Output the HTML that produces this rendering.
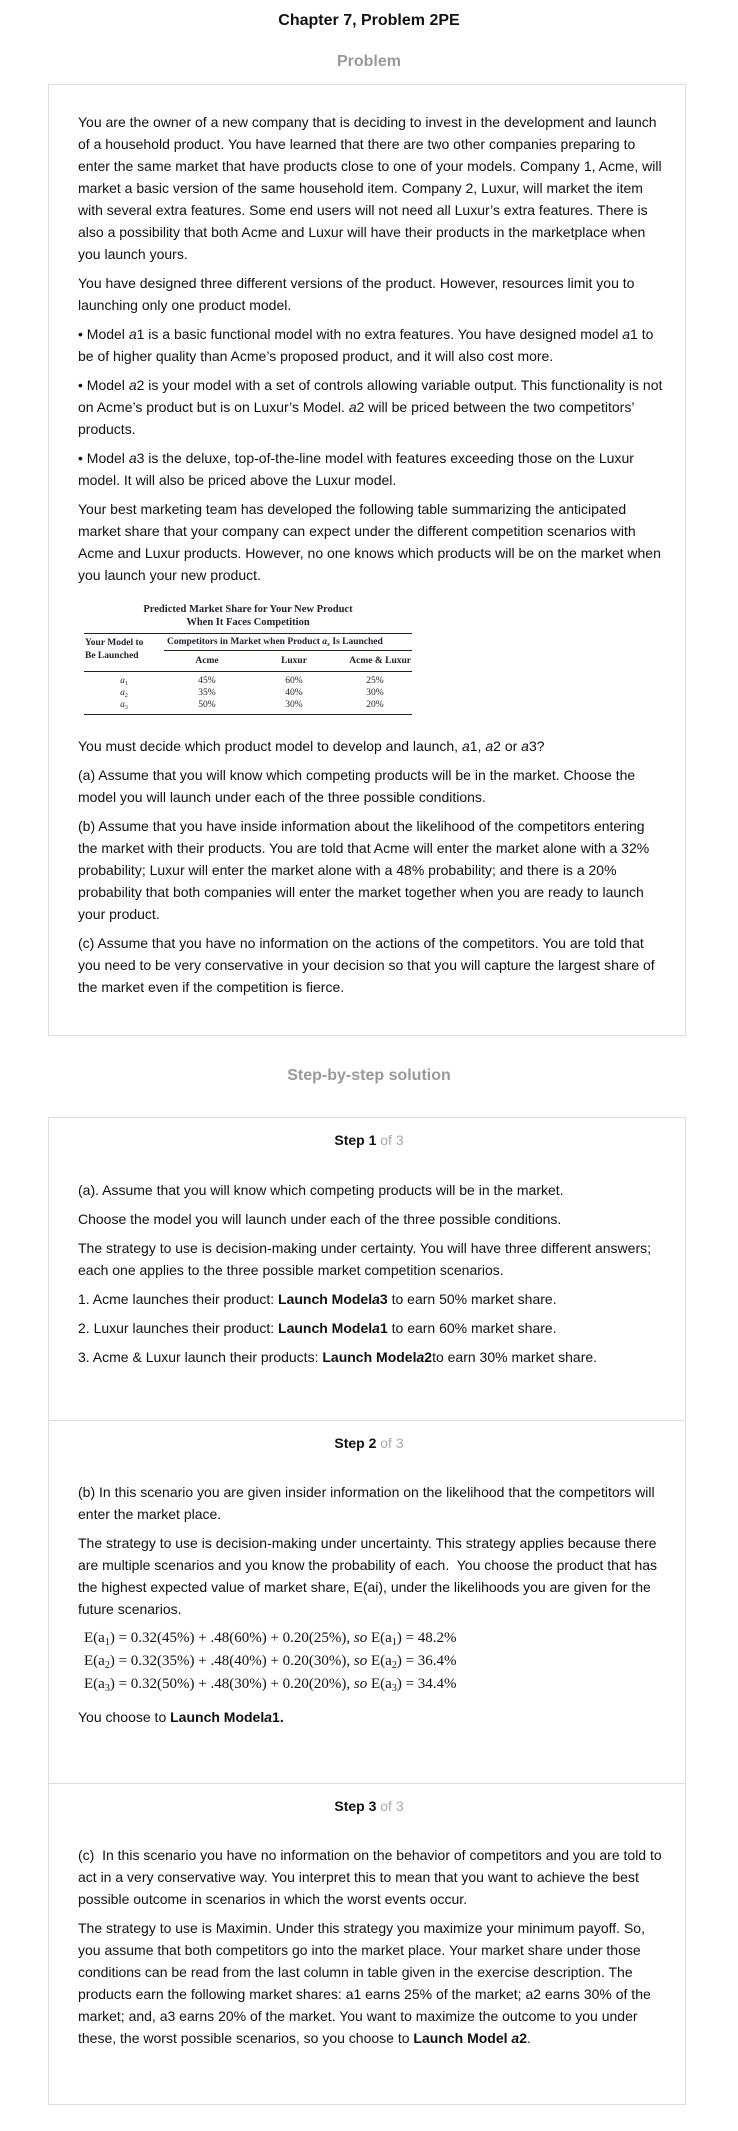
<!DOCTYPE html>
<html><head><meta charset="utf-8"><style>
body{margin:0;background:#fff;font-family:"Liberation Sans",Arial,sans-serif;color:#111;width:738px;height:2131px;position:relative;overflow:hidden}
.abs{position:absolute}
h1{position:absolute;top:12px;left:0;width:738px;text-align:center;font-size:16px;margin:0;font-weight:bold;color:#111}
.sec{position:absolute;left:0;width:738px;text-align:center;font-size:16px;font-weight:bold;color:#999;margin:0}
.box{position:absolute;left:48px;width:638px;border:1px solid #ddd;box-sizing:border-box}
.txt{position:absolute;left:78px;width:588px;font-size:14px;line-height:22px}
.txt p{margin:0 0 7px 0}
.st{position:absolute;left:0;width:738px;text-align:center;font-size:14px;font-weight:bold}
.st span{font-weight:normal;color:#aaa}
table{border-collapse:collapse;font-family:"Liberation Serif",serif;font-size:9.5px;table-layout:fixed}
.eq{font-family:"Liberation Serif",serif;font-size:15px;line-height:23px;margin-left:6px;white-space:nowrap}
.eq sub,.tb sub{font-size:10px;line-height:0;vertical-align:baseline;position:relative;top:3px}
.tb sub{font-size:6px;top:2px}
</style></head><body>
<h1>Chapter 7, Problem 2PE</h1>
<div class="sec" style="top:53px">Problem</div>
<div class="box" style="top:84px;height:952px"></div>
<div class="txt" style="top:111px">
<p>You are the owner of a new company that is deciding to invest in the development and launch of a household product. You have learned that there are two other companies preparing to enter the same market that have products close to one of your models. Company 1, Acme, will market a basic version of the same household item. Company 2, Luxur, will market the item with several extra features. Some end users will not need all Luxur’s extra features. There is also a possibility that both Acme and Luxur will have their products in the marketplace when you launch yours.</p>
<p>You have designed three different versions of the product. However, resources limit you to launching only one product model.</p>
<p>• Model <i>a</i>1 is a basic functional model with no extra features. You have designed model <i>a</i>1 to be of higher quality than Acme’s proposed product, and it will also cost more.</p>
<p>• Model <i>a</i>2 is your model with a set of controls allowing variable output. This functionality is not on Acme’s product but is on Luxur’s Model. <i>a</i>2 will be priced between the two competitors’ products.</p>
<p>• Model <i>a</i>3 is the deluxe, top-of-the-line model with features exceeding those on the Luxur model. It will also be priced above the Luxur model.</p>
<p>Your best marketing team has developed the following table summarizing the anticipated market share that your company can expect under the different competition scenarios with Acme and Luxur products. However, no one knows which products will be on the market when you launch your new product.</p>
</div>
<div class="abs" style="left:84px;top:603px;width:328px;font-family:'Liberation Serif',serif;font-weight:bold;font-size:10.5px;line-height:13px;text-align:center;color:#223">Predicted Market Share for Your New Product<br>When It Faces Competition</div>
<table class="abs tb" style="left:84px;top:633px;width:328px;color:#223">
<colgroup><col style="width:80px"><col style="width:86px"><col style="width:88px"><col style="width:74px"></colgroup>
<tr style="border-top:1.5px solid #222"><td rowspan="2" style="font-weight:bold;vertical-align:top;padding-top:3px;line-height:13px">Your Model to<br>Be Launched</td><td colspan="3" style="font-weight:bold;border-bottom:1.5px solid #222;padding:3px 0 3px 3px;white-space:nowrap">Competitors in Market when Product <i>a<sub>x</sub></i> Is Launched</td></tr>
<tr><td style="text-align:center;font-weight:bold;padding:5px 0 5px">Acme</td><td style="text-align:center;font-weight:bold">Luxur</td><td style="text-align:right;font-weight:bold">Acme &amp; Luxur</td></tr>
<tr style="border-top:1.5px solid #222"><td style="text-align:center;padding-top:4px"><i>a</i><sub>1</sub></td><td style="text-align:center;padding-top:4px">45%</td><td style="text-align:center;padding-top:4px">60%</td><td style="text-align:center;padding-top:4px">25%</td></tr>
<tr><td style="text-align:center"><i>a</i><sub>2</sub></td><td style="text-align:center">35%</td><td style="text-align:center">40%</td><td style="text-align:center">30%</td></tr>
<tr style="border-bottom:1.5px solid #222"><td style="text-align:center;padding-bottom:4px"><i>a</i><sub>3</sub></td><td style="text-align:center;padding-bottom:4px">50%</td><td style="text-align:center;padding-bottom:4px">30%</td><td style="text-align:center;padding-bottom:4px">20%</td></tr>
</table>
<div class="txt" style="top:735px">
<p>You must decide which product model to develop and launch, <i>a</i>1, <i>a</i>2 or <i>a</i>3?</p>
<p>(a) Assume that you will know which competing products will be in the market. Choose the model you will launch under each of the three possible conditions.</p>
<p>(b) Assume that you have inside information about the likelihood of the competitors entering the market with their products. You are told that Acme will enter the market alone with a 32% probability; Luxur will enter the market alone with a 48% probability; and there is a 20% probability that both companies will enter the market together when you are ready to launch your product.</p>
<p>(c) Assume that you have no information on the actions of the competitors. You are told that you need to be very conservative in your decision so that you will capture the largest share of the market even if the competition is fierce.</p>
</div>
<div class="sec" style="top:1067px">Step-by-step solution</div>
<div class="box" style="top:1117px;height:988px"></div>
<div class="abs" style="left:48px;top:1420px;width:638px;border-top:1px solid #ddd"></div>
<div class="abs" style="left:48px;top:1783px;width:638px;border-top:1px solid #ddd"></div>
<div class="st" style="top:1132px">Step 1 <span>of 3</span></div>
<div class="txt" style="top:1179px">
<p>(a). Assume that you will know which competing products will be in the market.</p>
<p>Choose the model you will launch under each of the three possible conditions.</p>
<p>The strategy to use is decision-making under certainty. You will have three different answers; each one applies to the three possible market competition scenarios.</p>
<p>1. Acme launches their product: <b>Launch Model<i>a</i>3</b> to earn 50% market share.</p>
<p>2. Luxur launches their product: <b>Launch Model<i>a</i>1</b> to earn 60% market share.</p>
<p>3. Acme &amp; Luxur launch their products: <b>Launch Model<i>a</i>2</b>to earn 30% market share.</p>
</div>
<div class="st" style="top:1435px">Step 2 <span>of 3</span></div>
<div class="txt" style="top:1481px">
<p>(b) In this scenario you are given insider information on the likelihood that the competitors will enter the market place.</p>
<p>The strategy to use is decision-making under uncertainty. This strategy applies because there are multiple scenarios and you know the probability of each.&nbsp; You choose the product that has the highest expected value of market share, E(ai), under the likelihoods you are given for the future scenarios.</p>
<div class="eq">E(a<sub>1</sub>) = 0.32(45%) + .48(60%) + 0.20(25%), <i>so</i> E(a<sub>1</sub>) = 48.2%<br>E(a<sub>2</sub>) = 0.32(35%) + .48(40%) + 0.20(30%), <i>so</i> E(a<sub>2</sub>) = 36.4%<br>E(a<sub>3</sub>) = 0.32(50%) + .48(30%) + 0.20(20%), <i>so</i> E(a<sub>3</sub>) = 34.4%</div>
<p style="margin-top:10px">You choose to <b>Launch Model<i>a</i>1.</b></p>
</div>
<div class="st" style="top:1798px">Step 3 <span>of 3</span></div>
<div class="txt" style="top:1844px">
<p>(c)&nbsp; In this scenario you have no information on the behavior of competitors and you are told to act in a very conservative way. You interpret this to mean that you want to achieve the best possible outcome in scenarios in which the worst events occur.</p>
<p>The strategy to use is Maximin. Under this strategy you maximize your minimum payoff. So, you assume that both competitors go into the market place. Your market share under those conditions can be read from the last column in table given in the exercise description. The products earn the following market shares: a1 earns 25% of the market; a2 earns 30% of the market; and, a3 earns 20% of the market. You want to maximize the outcome to you under these, the worst possible scenarios, so you choose to <b>Launch Model <i>a</i>2</b>.</p>
</div>
</body></html>
